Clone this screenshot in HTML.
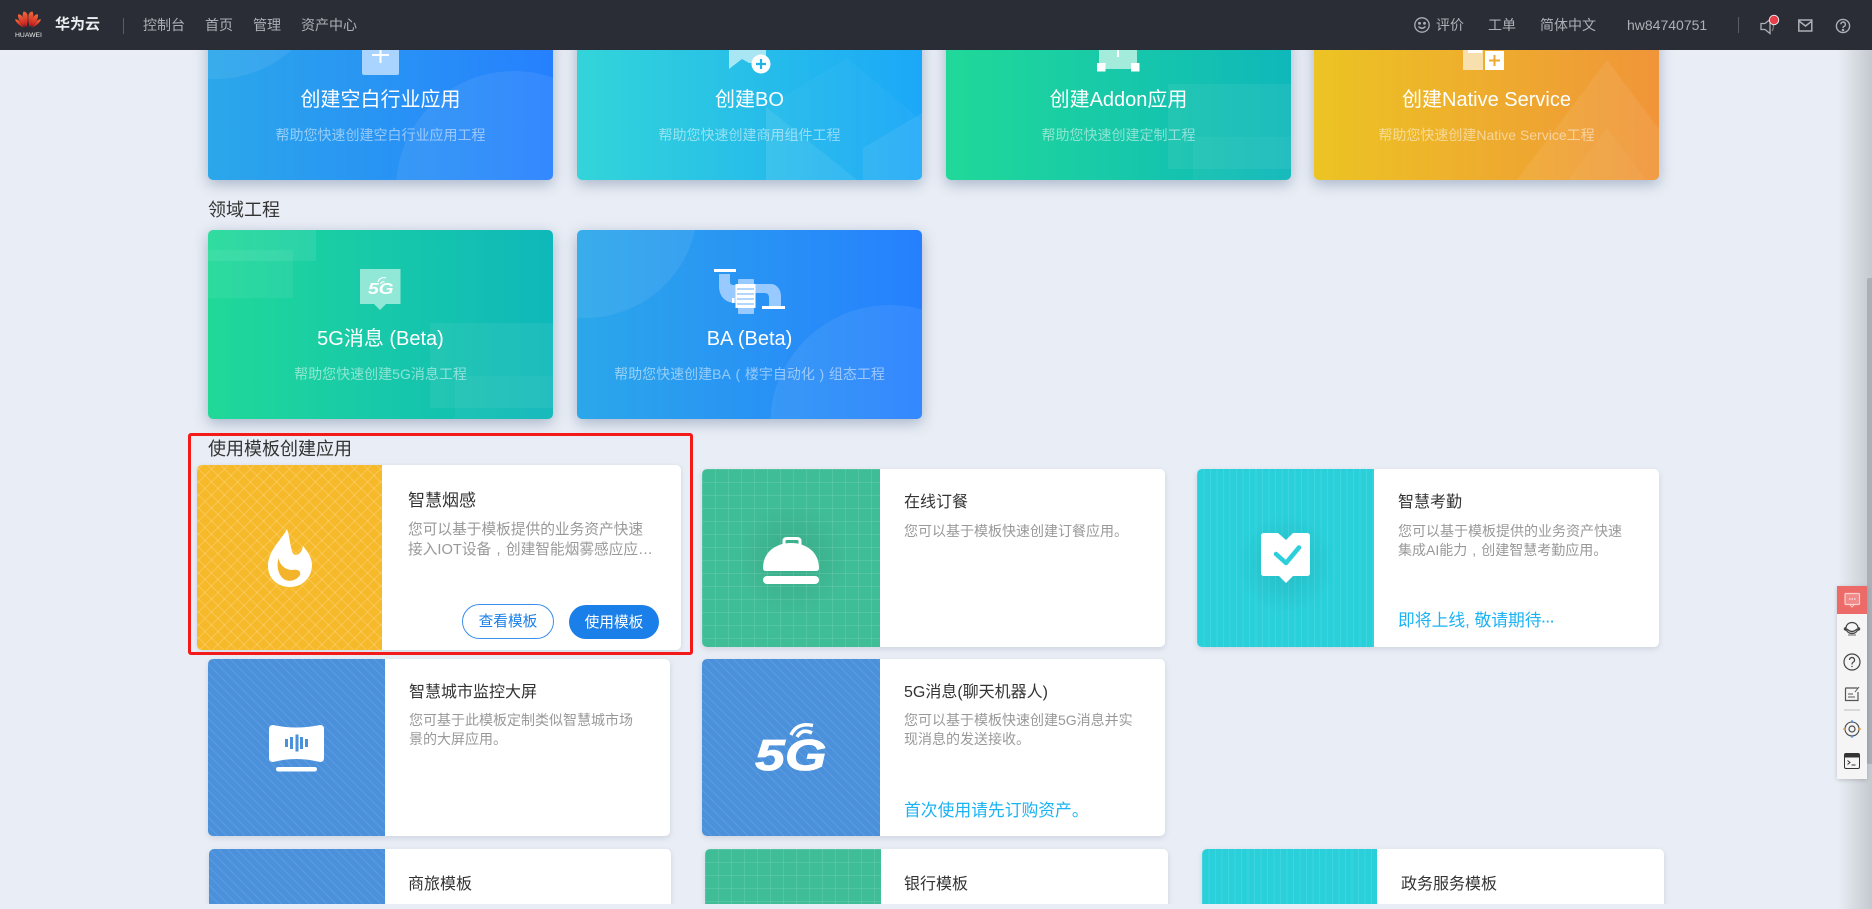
<!DOCTYPE html>
<html lang="zh-CN"><head><meta charset="utf-8"><title>华为云</title>
<style>
html,body{margin:0;padding:0;width:1872px;height:909px;overflow:hidden;background:#e9edf5;font-family:"Liberation Sans","Noto Sans CJK SC",sans-serif}
*{box-sizing:border-box}
.t{position:absolute;white-space:nowrap}
#top{position:absolute;left:0;top:0;width:1872px;height:50px;background:#2a2d36;z-index:5;color:#adb0b6;font-size:14px}
#top .n{top:15px;line-height:20px}
.clip{position:absolute;left:0;top:0;width:1872px;height:904px;overflow:hidden}
.c{position:absolute;width:345px;height:189px;border-radius:5px;overflow:hidden;box-shadow:0 4px 14px rgba(60,90,130,.38);color:#fff;text-align:center}
.c svg{position:absolute;left:0;top:0}
.c .h{position:absolute;left:0;width:100%;top:95px;font-size:20px;line-height:28px;white-space:nowrap}
.c .s{position:absolute;left:0;width:100%;top:132px;font-size:14px;line-height:24px;opacity:.5;white-space:nowrap}
.blue{background:linear-gradient(90deg,#2ba7ea,#2680fe)}
.cyan{background:linear-gradient(90deg,#33d5d9,#1ba8f8)}
.green{background:linear-gradient(90deg,#20d998,#0fb8ba)}
.yel{background:linear-gradient(90deg,#ecc423,#f09539)}
.sec{position:absolute;left:208px;font-size:18px;line-height:26px;color:#333;white-space:nowrap}
.m{position:absolute;background:#fff;border-radius:5px;overflow:hidden;box-shadow:0 2px 6px rgba(60,80,110,.16)}
.img{position:absolute;left:0;top:0;bottom:0}
.m b{position:absolute;font-weight:400;font-size:16px;color:#333;line-height:22px;white-space:nowrap}
.m p{position:absolute;margin:0;font-size:14px;line-height:19px;color:#999;white-space:nowrap}
.m i{position:absolute;font-style:normal;font-size:16.800px;line-height:24px;color:#1ab3f5;white-space:nowrap}
.pu{display:inline-block;width:1em;text-align:center}
.py{background-color:#f6b92a;background-image:repeating-linear-gradient(45deg,rgba(255,255,255,.18) 0 1px,transparent 1px 9.192px),repeating-linear-gradient(-45deg,rgba(255,255,255,.18) 0 1px,transparent 1px 9.192px)}
.pg{background-color:#3fbd96;background-image:linear-gradient(90deg,rgba(255,255,255,.1) 1px,transparent 1px),linear-gradient(rgba(255,255,255,.1) 1px,transparent 1px);background-size:13px 13px}
.pb{background-color:#4a90da;background-image:repeating-linear-gradient(45deg,rgba(255,255,255,.1) 0 1.400px,transparent 1.400px 6.364px)}
.pt{background-color:#29d0da;background-image:linear-gradient(90deg,rgba(255,255,255,.1) 1px,transparent 1px);background-size:6.500px 6.500px}
svg{display:block}
</style></head><body>
<div style="position:absolute;left:1838px;top:50px;width:34px;height:859px;background:linear-gradient(90deg,rgba(190,195,200,0),rgba(190,195,200,.85))"></div>

<div class="clip">
<!-- top row -->
<div class="c blue" style="left:208px;top:-9px"><svg width="345" height="189"><circle cx="8" cy="-25" r="113" fill="#fff" opacity=".07"/><circle cx="306" cy="198" r="118" fill="#fff" opacity=".07"/><rect x="154" y="30" width="37" height="54" rx="2" fill="#a8d4ff"/><path d="M172.500 52v20M164 64h17" stroke="#fff" stroke-width="2" fill="none"/></svg><div class="h">创建空白行业应用</div><div class="s">帮助您快速创建空白行业应用工程</div></div>

<div class="c cyan" style="left:577px;top:-9px"><svg width="345" height="189"><path d="M189 116L270 67L345 130V189H189Z" fill="#fff" opacity=".03"/><path d="M189 116L280 189H189Z" fill="#fff" opacity=".08"/><path d="M286 157L345 122V189H286Z" fill="#fff" opacity=".07"/><path d="M152 30H189V72H172L165 68L152 78Z" fill="#a9e6f4"/><circle cx="184" cy="73" r="9.500" fill="#fff"/><path d="M184 68v10M179 73h10" stroke="#1fb4e8" stroke-width="2.200"/></svg><div class="h">创建BO</div><div class="s">帮助您快速创建商用组件工程</div></div>

<div class="c green" style="left:946px;top:-9px"><svg width="345" height="189"><rect width="85" height="36" fill="#fff" opacity=".08"/><rect x="222" y="93" width="123" height="85" fill="#fff" opacity=".06"/><rect x="247" y="146" width="98" height="43" fill="#fff" opacity=".04"/><rect x="153" y="30" width="38" height="48" fill="#a3ecdc"/><path d="M172 50v16" stroke="#fff" stroke-width="2"/><rect x="151" y="72" width="8.500" height="8.500" fill="#fff"/><rect x="185" y="72" width="8.500" height="8.500" fill="#fff"/></svg><div class="h">创建Addon应用</div><div class="s">帮助您快速创建定制工程</div></div>

<div class="c yel" style="left:1314px;top:-9px;width:345px"><svg width="345" height="189"><path d="M293 69L383 189H203Z" fill="#fff" opacity=".07"/><path d="M293 137L332 189H254Z" fill="#fff" opacity=".04"/><rect x="149" y="40" width="20" height="39" fill="#f8e0ae"/><rect x="154" y="58" width="14" height="4" fill="#fff"/><rect x="171" y="60" width="19" height="19" fill="#fff"/><path d="M180.500 64v11M175 69.500h11" stroke="#ecaa2f" stroke-width="2"/></svg><div class="h">创建Native Service</div><div class="s">帮助您快速创建Native Service工程</div></div>

<div class="sec" style="top:197px">领域工程</div>

<div class="c green" style="left:208px;top:230px"><svg width="345" height="189"><rect width="108" height="31" fill="#fff" opacity=".08"/><rect y="20" width="85" height="48" fill="#fff" opacity=".06"/><rect x="222" y="93" width="123" height="85" fill="#fff" opacity=".06"/><rect x="247" y="146" width="98" height="43" fill="#fff" opacity=".04"/><path d="M152 39H192.500V74H178L172 80L166 74H152Z" fill="#91e8d6"/><text transform="translate(160 64) scale(1.200 1)" font-family="Liberation Sans" font-weight="700" font-style="italic" font-size="16" fill="#fff">5G</text><path d="M170 52a6 6 0 0 1 8-4M172.500 54a3 3 0 0 1 4-2" stroke="#fff" stroke-width="1.200" fill="none"/></svg><div class="h">5G消息 (Beta)</div><div class="s">帮助您快速创建5G消息工程</div></div>

<div class="c blue" style="left:577px;top:230px"><svg width="345" height="189"><circle cx="8" cy="-25" r="113" fill="#fff" opacity=".07"/><circle cx="313" cy="195" r="120" fill="#fff" opacity=".07"/><rect x="137" y="39" width="22" height="3" fill="#fff"/><path d="M142 44H153V52C153 55 155 55 159 55V73C148 73 142 66 142 56Z" fill="#99caff"/><path d="M177 54H194C200 54 204 60 204 66V76H192V68C192 64 190 63 187 63H177Z" fill="#99caff"/><rect x="161" y="49" width="16" height="35" rx="1" fill="#99caff"/><rect x="158.500" y="54" width="20" height="24" fill="#fff"/><path d="M160 59h17M160 64h17M160 69h17M160 74h17" stroke="#99caff" stroke-width="1.500"/><rect x="155" y="68" width="2.500" height="5" fill="#fff"/><rect x="185" y="76" width="23" height="3" fill="#fff"/></svg><div class="h">BA (Beta)</div><div class="s">帮助您快速创建BA<span class="pu">(</span>楼宇自动化<span class="pu">)</span>组态工程</div></div>

<div class="sec" style="top:436px">使用模板创建应用</div>

<!-- hovered -->
<div class="m" style="left:197px;top:465px;width:484px;height:185px;z-index:2;box-shadow:0 1px 4px rgba(60,80,110,.16)">
<div class="img py" style="width:185px"></div>
<svg style="position:absolute;left:0;top:0" width="185" height="185"><g transform="translate(-197 -465)"><path d="M287 529C283 538 268 550 268 566C268 578 277 587 290 587C303 587 312 577 312 565C312 557 307 551 303 546C302 552 299 555 295 555C290 553 291 540 287 529Z" fill="#fff"/><path d="M278.500 558C280 566 286 570 293 570C299 569 301 572 300 575C297 580 291 581.500 287 580.500C279 578 276 568 278.500 558Z" fill="#f3b42c"/></g></svg>
<b style="left:211px;top:24px;font-size:17px;line-height:24px">智慧烟感</b>
<p style="left:211px;top:54px;font-size:14.700px;line-height:22px">您可以基于模板提供的业务资产快速</p>
<p style="left:211px;top:75px;font-size:14.700px;line-height:21px">接入IOT设备<span class="pu">,</span>创建智能烟雾感应应…</p>
<div class="t" style="left:265px;top:139px;width:92px;height:35px;border:1px solid #3b8eea;border-radius:18px;background:#fff;color:#1a7fe8;text-align:center;font-size:14.700px;line-height:35px">查看模板</div>
<div class="t" style="left:372px;top:140px;width:90px;height:34px;border-radius:17px;background:#1a7fe8;color:#fff;text-align:center;font-size:14.700px;line-height:36px">使用模板</div>
</div>

<div class="m" style="left:702px;top:469px;width:463px;height:178px">
<div class="img pg" style="width:178px"></div>
<svg style="position:absolute;left:0;top:0" width="178" height="178"><defs><radialGradient id="sh"><stop offset="0" stop-color="#000" stop-opacity=".1"/><stop offset="1" stop-color="#000" stop-opacity="0"/></radialGradient></defs><circle cx="90" cy="90" r="55" fill="url(#sh)"/><g transform="translate(-702 -469)"><path d="M784 545V541Q784 538.500 787 538.500H797Q800 538.500 800 541V545" stroke="#fff" stroke-width="3" fill="none"/><path d="M763 568C763 552 776 543 791 543C806 543 819 552 819 568Q819 571 816 571H766Q763 571 763 568Z" fill="#fff"/><rect x="763" y="576" width="56" height="8" rx="4" fill="#fff"/></g></svg>
<b style="left:202px;top:23px">在线订餐</b>
<p style="left:202px;top:53px">您可以基于模板快速创建订餐应用。</p>
</div>

<div class="m" style="left:1197px;top:469px;width:462px;height:178px">
<div class="img pt" style="width:177px"></div>
<svg style="position:absolute;left:0;top:0" width="177" height="178"><circle cx="89" cy="95" r="50" fill="url(#sh)"/><g transform="translate(-1197 -469)"><path d="M1261 536Q1261 533 1264 533H1278L1286 540L1293 533H1307Q1310 533 1310 536V573Q1310 576 1307 576H1293L1286 583L1279 576H1264Q1261 576 1261 573Z" fill="#fff"/><path d="M1276 554L1286 563L1299 547.500" stroke="#2dcfdb" stroke-width="4.500" stroke-linecap="round" stroke-linejoin="round" fill="none"/></g></svg>
<b style="left:201px;top:23px">智慧考勤</b>
<p style="left:201px;top:53px">您可以基于模板提供的业务资产快速</p>
<p style="left:201px;top:72px">集成AI能力<span class="pu">,</span>创建智慧考勤应用。</p>
<i style="left:201px;top:140px">即将上线, 敬请期待<span style="font-size:13px;font-weight:700">···</span></i>
</div>

<div class="m" style="left:208px;top:659px;width:462px;height:177px">
<div class="img pb" style="width:177px"></div>
<svg style="position:absolute;left:0;top:0" width="177" height="177"><g transform="translate(-208 -659)"><path d="M269 729Q269 725 273 725Q296 730 320 725Q324 725 324 729V758Q324 762 320 762Q296 756 273 762Q269 762 269 758Z" fill="#fff"/><rect x="276" y="767" width="41" height="4.500" rx="2.200" fill="#fff"/><path d="M286.500 739v8M291.500 737v12M297 734.500v17M301.500 737v12M306.500 739v8" stroke="#4a90da" stroke-width="3"/></g></svg>
<b style="left:201px;top:23px">智慧城市监控大屏</b>
<p style="left:201px;top:52px">您可基于此模板定制类似智慧城市场</p>
<p style="left:201px;top:71px">景的大屏应用。</p>
</div>

<div class="m" style="left:702px;top:659px;width:463px;height:177px">
<div class="img pb" style="width:178px"></div>
<svg style="position:absolute;left:0;top:0" width="178" height="177"><g transform="translate(-702 -659)"><text transform="translate(755 770) scale(1.220 1)" font-family="Liberation Sans" font-weight="700" font-style="italic" font-size="44" fill="#fff" stroke="#fff" stroke-width=".8">5G</text><path d="M791 735Q797 722 813 725.500M797 737Q802 728 812 733" stroke="#fff" stroke-width="3.500" fill="none"/></g></svg>
<b style="left:202px;top:23px">5G消息(聊天机器人)</b>
<p style="left:202px;top:52px">您可以基于模板快速创建5G消息并实</p>
<p style="left:202px;top:71px">现消息的发送接收。</p>
<i style="left:202px;top:140px">首次使用请先订购资产。</i>
</div>

<div class="m" style="left:209px;top:849px;width:462px;height:55px;border-radius:5px 5px 0 0"><div class="img pb" style="width:176px"></div><b style="left:199px;top:25px">商旅模板</b></div>
<div class="m" style="left:705px;top:849px;width:463px;height:55px;border-radius:5px 5px 0 0"><div class="img pg" style="width:176px"></div><b style="left:199px;top:25px">银行模板</b></div>
<div class="m" style="left:1202px;top:849px;width:462px;height:55px;border-radius:5px 5px 0 0"><div class="img pt" style="width:175px"></div><b style="left:199px;top:25px">政务服务模板</b></div>
</div>

<div style="position:absolute;left:188px;top:433px;width:505px;height:222px;border:3px solid #f51a1a;border-radius:3px;z-index:3"></div>

<!-- header -->
<div id="top">
<svg style="position:absolute;left:14px;top:10px" width="28" height="19" viewBox="0 0 28 19"><defs><linearGradient id="lg" x1="0" y1="0" x2="0" y2="1"><stop offset="0" stop-color="#f06a3a"/><stop offset="1" stop-color="#c8141a"/></linearGradient></defs><g fill="url(#lg)"><path d="M12.500 17C9 13 7.500 6 9.500 1.500C11.500 1.500 13 3 13.500 5C14 9 13.500 13 12.500 17Z"/><path d="M15.500 17C19 13 20.500 6 18.500 1.500C16.500 1.500 15 3 14.500 5C14 9 14.500 13 15.500 17Z"/><path d="M11 17C7 14 3.500 9 4 4.500C5.500 4 7.500 5 8.500 7C9.500 10.500 10.500 14 11 17Z"/><path d="M17 17C21 14 24.500 9 24 4.500C22.500 4 20.500 5 19.500 7C18.500 10.500 17.500 14 17 17Z"/><path d="M10 17.500C6 16 2 13 1 9.500C3 9 5 10.500 6 12C7.500 14 9 16 10 17.500Z"/><path d="M18 17.500C22 16 26 13 27 9.500C25 9 23 10.500 22 12C20.500 14 19 16 18 17.500Z"/></g></svg>
<div class="t" style="left:15px;top:31px;font-size:6.800px;line-height:9px;color:#eee;width:26px;text-align:center">HUAWEI</div>
<div class="t n" style="left:55px;font-size:15px;font-weight:700;color:#eceef0">华为云</div>
<div style="position:absolute;left:123px;top:18px;width:1px;height:16px;background:#5a5d66"></div>
<div class="t n" style="left:143px">控制台</div>
<div class="t n" style="left:205px">首页</div>
<div class="t n" style="left:253px">管理</div>
<div class="t n" style="left:301px">资产中心</div>
<svg style="position:absolute;left:1413px;top:16px" width="18" height="18" fill="none" stroke="#adb0b6" stroke-width="1.300"><circle cx="9" cy="9" r="7.200"/><circle cx="6.500" cy="7.300" r=".8" fill="#adb0b6"/><circle cx="11.500" cy="7.300" r=".8" fill="#adb0b6"/><path d="M5.500 10.500Q9 14 12.500 10.500"/></svg>
<div class="t n" style="left:1436px">评价</div>
<div class="t n" style="left:1488px">工单</div>
<div class="t n" style="left:1540px">简体中文</div>
<div class="t n" style="left:1627px">hw84740751</div>
<div style="position:absolute;left:1738px;top:17px;width:1px;height:16px;background:#5a5d66"></div>
<svg style="position:absolute;left:1758px;top:12px" width="26" height="24" fill="none"><path d="M3 11.500H7L12 7.500V21.500L7 17.500H3Z" stroke="#adb0b6" stroke-width="1.300"/><path d="M14 10Q17 14.500 14 19" stroke="#777" stroke-width="1.300"/><circle cx="16" cy="8" r="4.700" fill="#e8404a" stroke="#e8e8e8" stroke-width="1"/></svg>
<svg style="position:absolute;left:1798px;top:19px" width="15" height="13" fill="none" stroke="#adb0b6" stroke-width="1.500"><rect x=".8" y="1" width="13" height="11"/><path d="M1 2L7.500 7L14 2"/></svg>
<svg style="position:absolute;left:1835px;top:18px" width="16" height="16" fill="none" stroke="#adb0b6" stroke-width="1.400"><circle cx="8" cy="8" r="6.600"/><path d="M5.800 6.300A2.300 2.300 0 1 1 8.800 8.500Q8 9 8 10"/><circle cx="8" cy="12" r=".6" fill="#adb0b6"/></svg>
</div>

<!-- scrollbar -->
<div style="position:absolute;left:1867px;top:278px;width:5px;height:486px;background:#abb0b6;border-radius:2px 0 0 2px"></div>

<!-- side toolbar -->
<div style="position:absolute;left:1837px;top:586px;width:30px;height:193px;background:#f5f5f5;box-shadow:0 1px 4px rgba(0,0,0,.18);z-index:4">
<svg width="30" height="193" fill="none"><rect width="30" height="28" fill="#ec6a68"/><g transform="translate(-1837 -586)"><rect x="1845" y="593.500" width="14.500" height="11" rx="1" fill="#f08a88" stroke="#f9d0ce" stroke-width="1.200"/><path d="M1850 605l2 2 2-2" stroke="#f9d0ce"/><path d="M1849 599h1.500M1851.500 599h1.500M1854 599h1.500" stroke="#fff"/>
<ellipse cx="1852" cy="628" rx="6" ry="5.500" stroke="#444" stroke-width="1.200"/><path d="M1847 629Q1852 634 1857 629" stroke="#444" stroke-width="1.300"/><path d="M1844 630a2 2 0 0 1 2-3v4zM1860 630a2 2 0 0 0-2-3v4z" fill="#444"/><path d="M1848 635h8" stroke="#666"/>
<circle cx="1852" cy="662" r="8" stroke="#444" stroke-width="1.200"/><path d="M1849.500 660A2.500 2.500 0 1 1 1853 662.300Q1852 663 1852 664.500" stroke="#444" stroke-width="1.200"/><circle cx="1852" cy="666.500" r=".7" fill="#444"/>
<path d="M1857.500 688H1846Q1845.500 688 1845.500 689V700.500H1858V692" stroke="#555" stroke-width="1.200"/><path d="M1848 694h5M1848 697h7M1855 692l4-5" stroke="#555"/>
<path d="M1844 710h16" stroke="#bbb"/>
<circle cx="1852" cy="729" r="7" stroke="#4a4a4a" stroke-width="1.100"/><circle cx="1852" cy="729" r="3" stroke="#4a4a4a" stroke-width="1.200"/><path d="M1852 720v3M1852 735v3" stroke="#3b8eea" stroke-width="1.200"/><path d="M1843 729h3M1858 729h3" stroke="#e89a3a" stroke-width="1.200"/>
<rect x="1844.500" y="753.500" width="15" height="15" rx="1.500" stroke="#333"/><rect x="1844.500" y="753.500" width="15" height="4" fill="#333"/><path d="M1847.500 760.500l2.500 2-2.500 2M1851.500 765h4" stroke="#333"/></g></svg>
</div>
</body></html>
